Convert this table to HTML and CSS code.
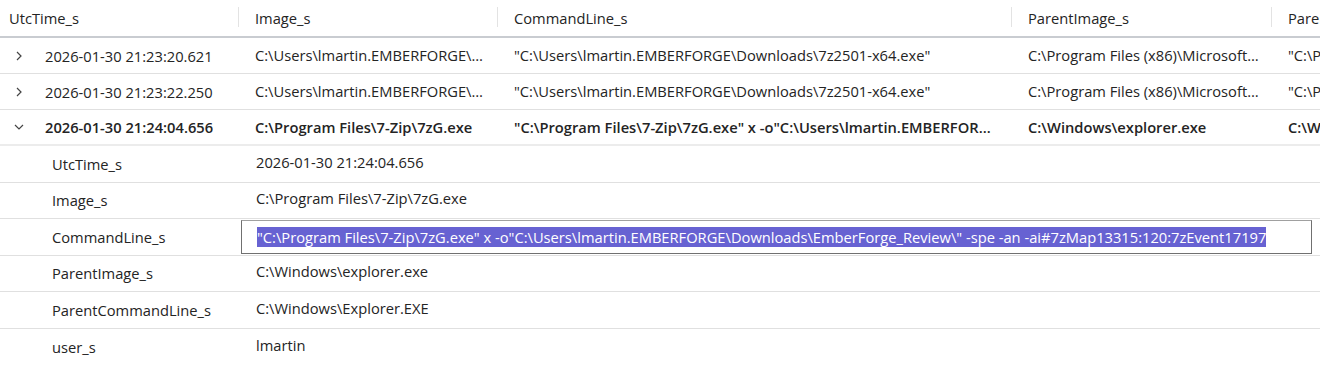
FILE: index.html
```html
<!DOCTYPE html>
<html lang="en">

<head>
	<meta charset="UTF-8">
	<meta name="viewport" content="width=device-width, initial-scale=1.0">
	<title>Results</title>

	<link rel="stylesheet" href="styles.css">
</head>

<body>
	<div class="grid">
		<div class="row header">
			<div class="cell first">UtcTime_s</div>
			<div class="cell">Image_s</div>
			<div class="cell">CommandLine_s</div>
			<div class="cell">ParentImage_s</div>
			<div class="cell">ParentCommandLine_s</div>
		</div>

		<div class="row">
			<div class="cell first">
				<svg class="chev" width="10" height="10" viewBox="0 0 10 10"><path d="M3 1 L7 5 L3 9" fill="none" stroke="#444" stroke-width="1.2"/></svg>
				<span>2026-01-30 21:23:20.621</span>
			</div>
			<div class="cell">C:\Users\lmartin.EMBERFORGE\AppData\Local\Temp\7z2501-x64.exe</div>
			<div class="cell">"C:\Users\lmartin.EMBERFORGE\Downloads\7z2501-x64.exe"</div>
			<div class="cell">C:\Program Files (x86)\Microsoft\Edge\Application\msedge.exe</div>
			<div class="cell">"C:\Program Files (x86)\Microsoft\Edge\Application\msedge.exe"</div>
		</div>

		<div class="row">
			<div class="cell first">
				<svg class="chev" width="10" height="10" viewBox="0 0 10 10"><path d="M3 1 L7 5 L3 9" fill="none" stroke="#444" stroke-width="1.2"/></svg>
				<span>2026-01-30 21:23:22.250</span>
			</div>
			<div class="cell">C:\Users\lmartin.EMBERFORGE\AppData\Local\Temp\7z2501-x64.exe</div>
			<div class="cell">"C:\Users\lmartin.EMBERFORGE\Downloads\7z2501-x64.exe"</div>
			<div class="cell">C:\Program Files (x86)\Microsoft\Edge\Application\msedge.exe</div>
			<div class="cell">"C:\Program Files (x86)\Microsoft\Edge\Application\msedge.exe"</div>
		</div>

		<div class="row open">
			<div class="cell first">
				<svg class="chev" width="10" height="10" viewBox="0 0 10 10"><path d="M1 3 L5 7 L9 3" fill="none" stroke="#444" stroke-width="1.2"/></svg>
				<span>2026-01-30 21:24:04.656</span>
			</div>
			<div class="cell">C:\Program Files\7-Zip\7zG.exe</div>
			<div class="cell">"C:\Program Files\7-Zip\7zG.exe" x -o"C:\Users\lmartin.EMBERFORGE\Downloads\EmberForge_Review\" -spe -an -ai#7zMap13315:120:7zEvent17197</div>
			<div class="cell">C:\Windows\explorer.exe</div>
			<div class="cell">C:\Windows\Explorer.EXE</div>
		</div>

		<div class="details">
			<div class="detail">
				<div class="label">UtcTime_s</div>
				<div class="value">2026-01-30 21:24:04.656</div>
			</div>
			<div class="detail">
				<div class="label">Image_s</div>
				<div class="value">C:\Program Files\7-Zip\7zG.exe</div>
			</div>
			<div class="detail">
				<div class="label">CommandLine_s</div>
				<div class="value editing"><span class="selected">"C:\Program Files\7-Zip\7zG.exe" x -o"C:\Users\lmartin.EMBERFORGE\Downloads\EmberForge_Review\" -spe -an -ai#7zMap13315:120:7zEvent17197</span></div>
			</div>
			<div class="detail">
				<div class="label">ParentImage_s</div>
				<div class="value">C:\Windows\explorer.exe</div>
			</div>
			<div class="detail">
				<div class="label">ParentCommandLine_s</div>
				<div class="value">C:\Windows\Explorer.EXE</div>
			</div>
			<div class="detail last">
				<div class="label">user_s</div>
				<div class="value">lmartin</div>
			</div>
		</div>
	</div>
</body>

</html>
```

FILE: styles.css
```css
body {
	font-family: "Open Sans", "Noto Sans", sans-serif;
	font-size: 14.7px;
	color: #242424;
	margin: 0;
	padding: 0;
	background-color: #fff;
	overflow: hidden;
}

.grid {
	width: 1320px;
	overflow: hidden;
}

.row {
	display: grid;
	grid-template-columns: 238px 259px 514px 260px 300px;
	height: 36px;
	border-bottom: 1px solid #e0e0e0;
	box-sizing: border-box;
}

.header {
	height: 38px;
	border-bottom: 2px solid #c9ccd1;
}

.cell {
	display: flex;
	align-items: center;
	padding: 0 10px 0 17px;
	white-space: nowrap;
	overflow: hidden;
	text-overflow: ellipsis;
	min-width: 0;
}

.cell.first {
	padding-left: 14px;
}

.header .cell {
	position: relative;
	display: block;
	line-height: 36px;
}

.header .cell.first {
	padding-left: 9px;
}

.header .cell + .cell::before {
	content: "";
	position: absolute;
	left: 0;
	top: 7px;
	height: 20px;
	border-left: 1px solid #e3e3e3;
}

.row:not(.header) .cell:not(.first) {
	display: block;
	line-height: 35px;
}

.chev {
	flex: none;
	margin-right: 21px;
}

.first span {
	overflow: hidden;
	text-overflow: ellipsis;
}

.open {
	font-weight: 600;
	border-bottom: 2px solid #ececec;
}

.detail {
	display: grid;
	grid-template-columns: 241px 1071px;
	height: 36.5px;
	border-bottom: 1px solid #e0e0e0;
	box-sizing: border-box;
	align-items: center;
}

.detail.last {
	border-bottom: none;
}

.label {
	padding-left: 52px;
}

.value {
	padding-left: 15px;
	white-space: nowrap;
	margin-top: -4px;
}

.value.editing {
	margin-top: 0;
	height: 34px;
	box-sizing: border-box;
	border: 1px solid #707070;
	border-top-color: #a0a0a0;
	display: flex;
	align-items: center;
}

.selected {
	background-color: #6762d2;
	color: #fff;
	line-height: 20px;
}
```
